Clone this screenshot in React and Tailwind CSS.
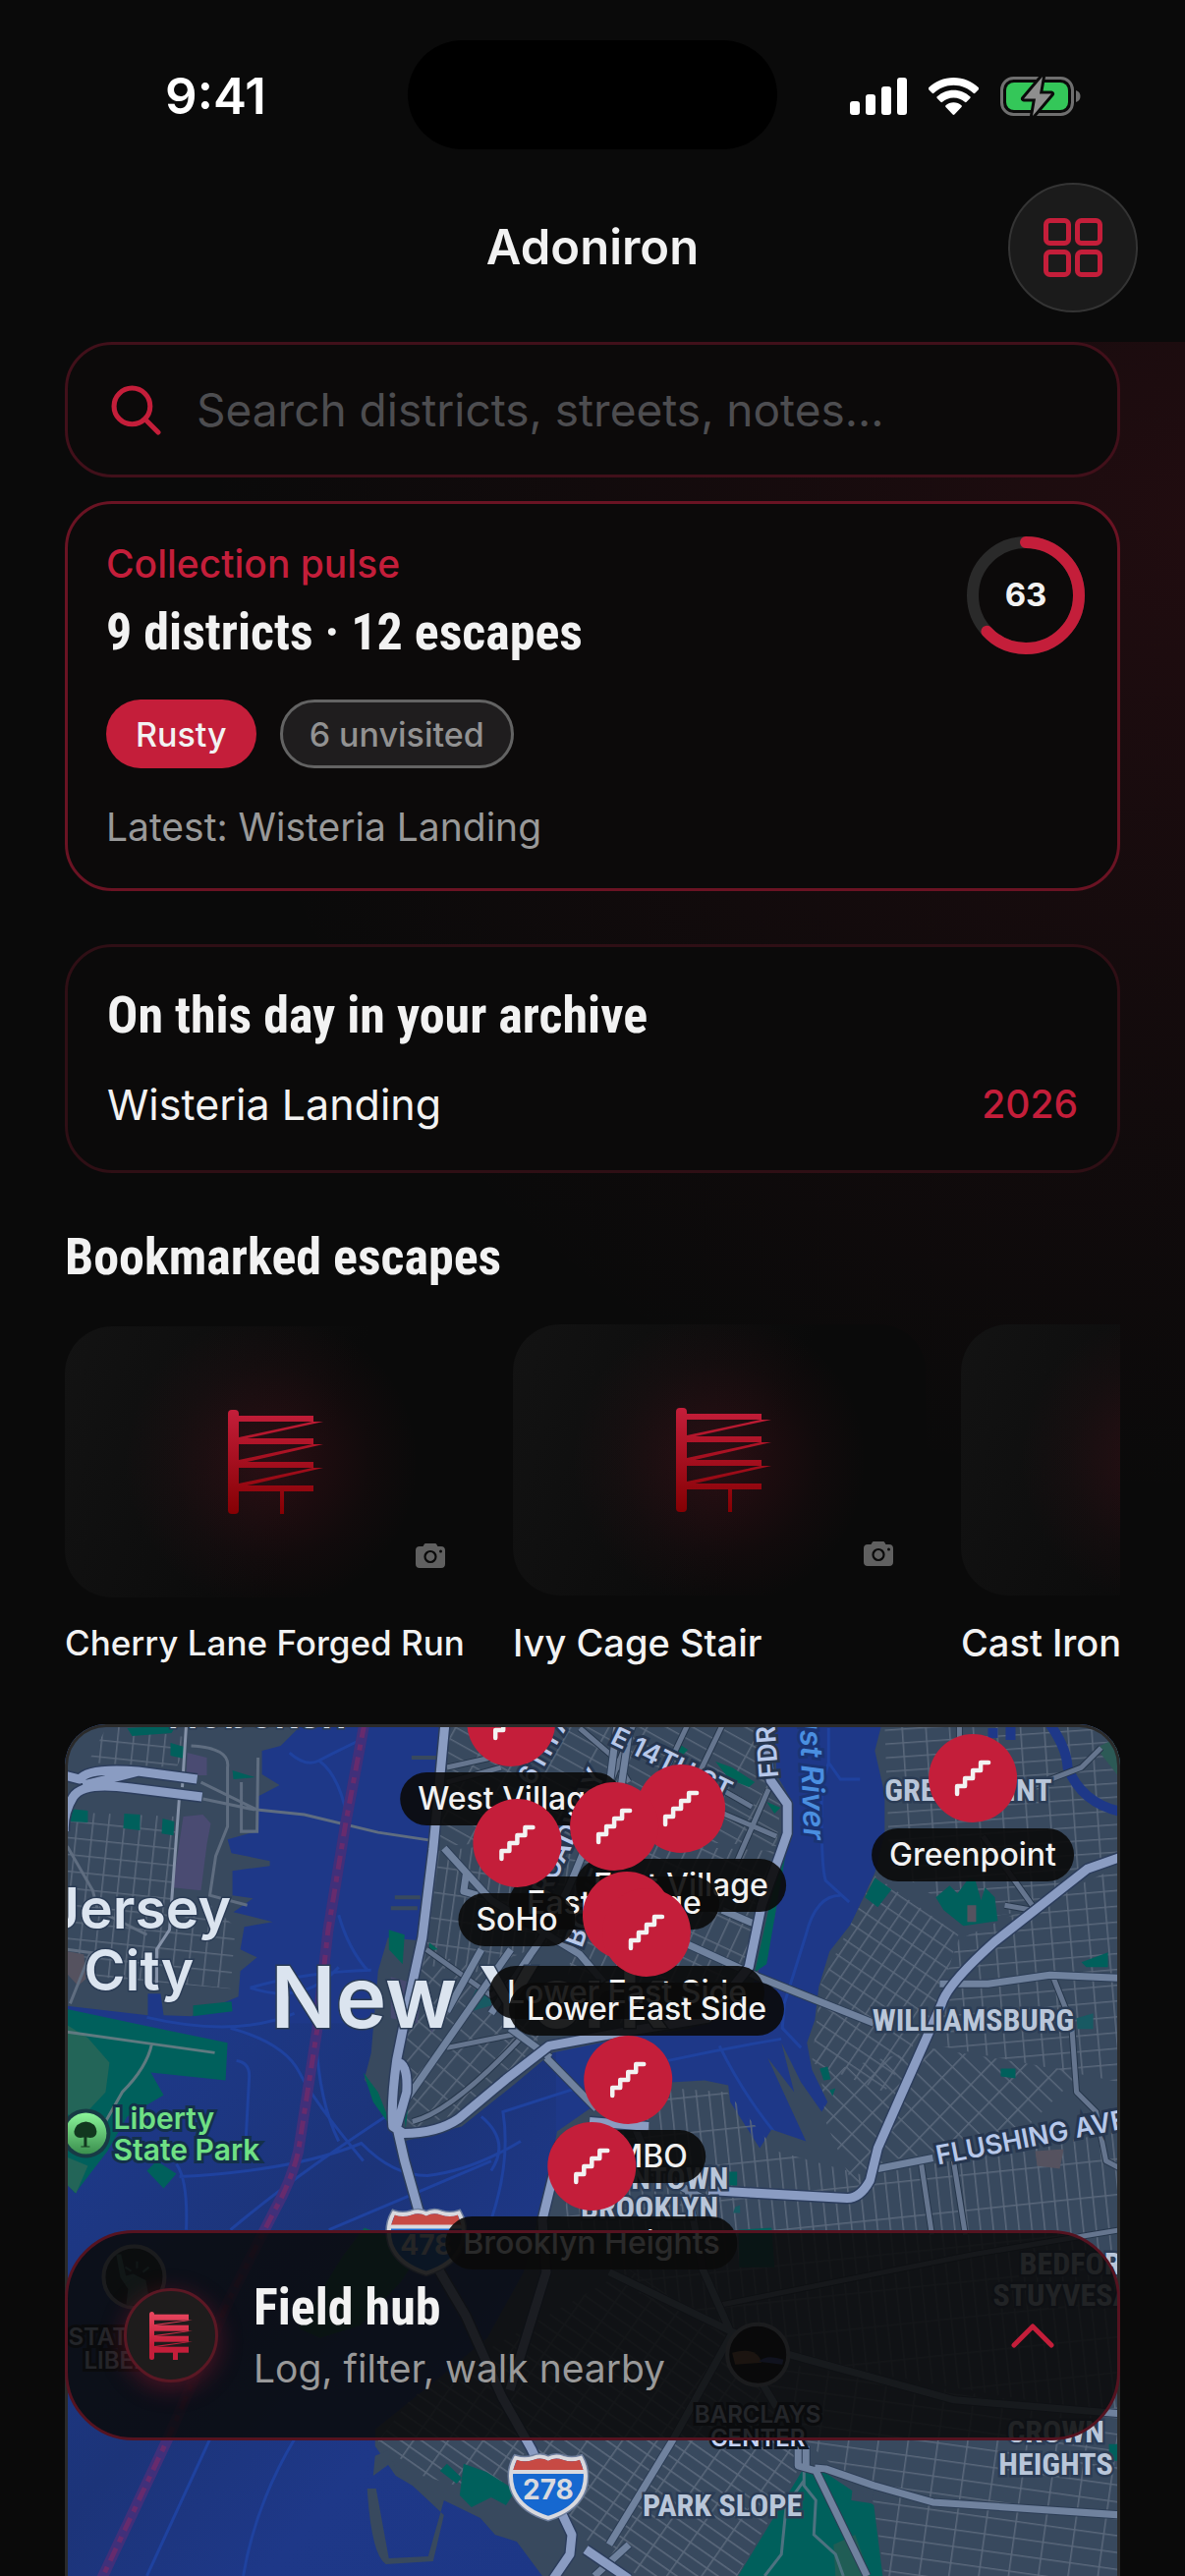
import React from "react";

const DISPLAY =
  "font-['Liberation_Sans_Narrow','Roboto_Condensed',Roboto,sans-serif] font-bold text-[52px] leading-[64px] text-[#f2f2f2]";

function StatusBar() {
  return (
    <div className="grid h-[186px] shrink-0 grid-cols-[1fr_376px_1fr] items-start pt-[41px]">
      <div className="flex h-[114px] items-center justify-center pl-6 text-[51px] font-semibold text-white">9:41</div>
      <div className="h-[111px] rounded-full bg-black" />
      <div className="flex h-[114px] items-center justify-center gap-[22px] pr-8">
        <svg width="58" height="38" viewBox="0 0 58 38" fill="#fff" aria-hidden="true">
          <rect x="0" y="24" width="10" height="14" rx="3" />
          <rect x="16" y="17" width="10" height="21" rx="3" />
          <rect x="32" y="9" width="10" height="29" rx="3" />
          <rect x="48" y="0" width="10" height="38" rx="3" />
        </svg>
        <svg width="51" height="38" viewBox="0 0 51 38" fill="#fff" aria-hidden="true">
          <path d="M25.5 0C35.400 0 44.400 3.900 51 10.300c.5.500.5 1.200 0 1.700l-3.700 3.800c-.5.500-1.200.5-1.700 0C40.300 10.800 33.300 7.800 25.500 7.800S10.700 10.800 5.400 15.800c-.5.500-1.200.5-1.700 0L0 12c-.5-.5-.5-1.200 0-1.700C6.600 3.900 15.600 0 25.500 0z" />
          <path d="M25.500 12.700c6.500 0 12.400 2.500 16.800 6.600.5.500.5 1.200 0 1.700l-3.700 3.800c-.5.500-1.200.5-1.700 0-3-2.700-7-4.300-11.400-4.300s-8.400 1.600-11.400 4.300c-.5.500-1.200.5-1.700 0L8.700 21c-.5-.5-.5-1.200 0-1.700 4.400-4.100 10.300-6.600 16.800-6.600z" />
          <path d="M25.500 25.200c3.100 0 5.900 1.100 8 3 .5.500.5 1.200 0 1.700l-7.100 7.600c-.5.500-1.300.5-1.800 0l-7.100-7.600c-.5-.5-.5-1.200 0-1.700 2.100-1.900 4.900-3 8-3z" />
        </svg>
        <svg width="82" height="42" viewBox="0 0 82 42" aria-hidden="true">
          <rect x="1.500" y="2.500" width="72" height="37" rx="12" fill="none" stroke="#6f6f6f" strokeWidth="3" />
          <rect x="6" y="7" width="63" height="28" rx="8" fill="#34c759" />
          <path d="M77 15c3 1 4.500 3 4.500 6s-1.500 5-4.500 6z" fill="#6f6f6f" />
          <path d="M43 1L24 23.500h12L33 41l19-22.500H40z" fill="#8e8e8e" stroke="#0a0a0a" strokeWidth="6" strokeLinejoin="round" paintOrder="stroke" />
        </svg>
      </div>
    </div>
  );
}

function Header() {
  return (
    <header className="grid h-[162px] shrink-0 grid-cols-[1fr_auto_1fr] items-start px-12">
      <span />
      <h1 className="text-[49px] font-semibold leading-[132px] text-[#f2f2f2]">Adoniron</h1>
      <button
        type="button"
        aria-label="Open grid menu"
        className="flex size-[132px] items-center justify-center justify-self-end rounded-full border-2 border-[#343434] bg-[#1b1b1b]"
      >
        <svg width="60" height="60" viewBox="0 0 60 60" fill="none" stroke="#c41e3a" strokeWidth="5" aria-hidden="true">
          <rect x="2.500" y="2.500" width="23" height="23" rx="4" />
          <rect x="34.500" y="2.500" width="23" height="23" rx="4" />
          <rect x="2.500" y="34.500" width="23" height="23" rx="4" />
          <rect x="34.500" y="34.500" width="23" height="23" rx="4" />
        </svg>
      </button>
    </header>
  );
}

function SearchBar() {
  return (
    <label className="flex h-[138px] shrink-0 items-center gap-9 rounded-[48px] border-[3px] border-[#41101a] bg-[#0c0a0a] px-11">
      <svg width="51" height="51" viewBox="0 0 50 50" fill="none" stroke="#c41e3a" strokeWidth="5" strokeLinecap="round" className="shrink-0" aria-hidden="true">
        <circle cx="21" cy="21" r="18" />
        <path d="M34.500 34.500L47 47" />
      </svg>
      <input
        type="search"
        aria-label="Search"
        placeholder="Search districts, streets, notes…"
        className="w-full min-w-0 bg-transparent text-[46px] text-[#f2f2f2] outline-none placeholder:text-[#4d4d50]"
      />
    </label>
  );
}

function ScoreRing({ value }) {
  const length = 2 * Math.PI * 54;
  return (
    <div className="relative size-[120px]">
      <svg viewBox="0 0 120 120" fill="none" strokeWidth="12" className="size-full -rotate-90" aria-hidden="true">
        <circle cx="60" cy="60" r="54" stroke="#2a2a2a" />
        <circle cx="60" cy="60" r="54" stroke="#c41e3a" strokeLinecap="round" strokeDasharray={`${(length * value) / 100} ${length}`} />
      </svg>
      <span className="absolute inset-0 flex items-center justify-center text-[33px] font-bold text-[#f2f2f2]">{value}</span>
    </div>
  );
}

function PulseCard() {
  return (
    <section className="mt-6 flex shrink-0 items-start justify-between rounded-[48px] border-[3px] border-[#6a1323] bg-[#0c0a0a] py-[33px] pl-[39px] pr-[33px]">
      <div>
        <p className="text-[39px] font-medium leading-[56px] text-[#c41e3a]">Collection pulse</p>
        <h2 className={`mt-[10px] ${DISPLAY}`}>9 districts · 12 escapes</h2>
        <div className="mt-9 flex gap-6">
          <span className="flex h-[70px] items-center rounded-full bg-[#c41e3a] px-[30px] text-[34px] font-medium text-[#f2f2f2]">Rusty</span>
          <span className="flex h-[70px] items-center rounded-full border-[3px] border-[#636363] bg-[#1f1d1e] px-[27px] text-[34px] font-medium text-[#929292]">
            6 unvisited
          </span>
        </div>
        <p className="mt-[30px] text-[39px] leading-[59px] text-[#999]">Latest: Wisteria Landing</p>
      </div>
      <ScoreRing value={63} />
    </section>
  );
}

function ArchiveCard() {
  return (
    <section className="mt-[54px] h-[233px] shrink-0 rounded-[48px] border-[3px] border-[#2f0f15] bg-[#0b0a0a] px-10 pt-[38px]">
      <h2 className={DISPLAY}>On this day in your archive</h2>
      <div className="mt-7 flex items-center justify-between leading-[60px]">
        <span className="text-[43px] text-[#f2f2f2]">Wisteria Landing</span>
        <span className="text-[39px] font-medium text-[#c41e3a]">2026</span>
      </div>
    </section>
  );
}

function FireEscape() {
  return (
    <svg width="105" height="106" viewBox="-8 0 105 106" aria-hidden="true">
      <defs>
        <linearGradient id="escape" x1="0" y1="0" x2="0" y2="106" gradientUnits="userSpaceOnUse">
          <stop stopColor="#c41e3a" />
          <stop offset="1" stopColor="#850003" />
        </linearGradient>
      </defs>
      <g fill="url(#escape)">
        <rect width="11" height="106" rx="4" />
        <rect x="11" y="6" width="76" height="6" />
        <rect x="11" y="29" width="76" height="6" />
        <rect x="11" y="53" width="76" height="6" />
        <rect x="11" y="77" width="76" height="6" />
        <path d="M86 12h11L15 30h-4v-2z" />
        <path d="M86 35h11L15 54h-4v-3z" />
        <path d="M86 59h11L15 78h-4v-3z" />
        <rect x="53" y="83" width="4" height="23" />
      </g>
    </svg>
  );
}

function Camera() {
  return (
    <svg width="30" height="25" viewBox="0 0 30 25" aria-hidden="true">
      <path
        fill="#606060"
        d="M10.500 0h9c1 0 1.600.4 2 1.200L22.500 3H26c2.500 0 4 1.500 4 4v14c0 2.500-1.500 4-4 4H4c-2.500 0-4-1.500-4-4V7c0-2.500 1.500-4 4-4h3.500l1-1.800C8.900.4 9.500 0 10.500 0z"
      />
      <circle cx="15" cy="13.500" r="5.500" fill="none" stroke="#0a0a0a" strokeWidth="2.200" />
      <circle cx="25.500" cy="8" r="1.500" fill="#0a0a0a" />
    </svg>
  );
}

const bookmarks = ["Cherry Lane Forged Run", "Ivy Cage Stair", "Cast Iron Corner"];

function Bookmarks() {
  return (
    <section className="mt-[54px] shrink-0">
      <h2 className={DISPLAY}>Bookmarked escapes</h2>
      <div className="mt-9 flex items-center gap-9 overflow-hidden">
        {bookmarks.map((name, i) => (
          <a key={name} href="#escape" className="block w-[420px] shrink-0">
            <div className="relative flex h-[276px] items-center justify-center rounded-[48px] bg-[radial-gradient(circle_at_center,rgba(196,30,58,0.17),rgba(196,30,58,0.04)_100px,transparent_150px),linear-gradient(110deg,#131313,#0a0a0a_60%)]">
              <FireEscape />
              <span className="absolute bottom-[30px] right-[33px]">
                <Camera />
              </span>
            </div>
            <p
              className={`mt-[22px] whitespace-nowrap font-medium text-[#f2f2f2] ${
                i === 0 ? "text-[35px] leading-[48px]" : "text-[38px] leading-[52px]"
              }`}
            >
              {name}
            </p>
          </a>
        ))}
      </div>
    </section>
  );
}

function Shield({ x, y, children }) {
  return (
    <g transform={`translate(${x} ${y})`}>
      <path d="M-33-28Q-24-25-15-28Q-7-31 0-27Q7-31 15-28Q24-25 33-28Q41-14 36 3Q29 24 0 33Q-29 24-36 3Q-41-14-33-28z" fill="#1668d0" stroke="#6e7f9e" strokeWidth="7" />
      <path d="M-33-28Q-24-25-15-28Q-7-31 0-27Q7-31 15-28Q24-25 33-28Q41-14 36 3Q29 24 0 33Q-29 24-36 3Q-41-14-33-28z" fill="#1668d0" stroke="#d9d9de" strokeWidth="4" />
      <path d="M-32-26Q-24-23-15-26Q-7-29 0-25Q7-29 15-26Q24-23 32-26L36-15H-36z" fill="#c74a44" />
      <path d="M-36-14H36" stroke="#d9d9de" strokeWidth="4" />
      <text y="14" textAnchor="middle" fontSize="28" fontWeight="700" fill="#d9d9de">{children}</text>
    </g>
  );
}

function Grid({ id, w, h, angle }) {
  return (
    <pattern id={id} width={w} height={h} patternUnits="userSpaceOnUse" patternTransform={`rotate(${angle})`}>
      <path d={`M0 0H${w}M0 0V${h}`} stroke="#5a687b" strokeWidth="3" fill="none" />
    </pattern>
  );
}

const highways = [
  "M201 1812L141 1804Q90 1800 82 1812L66 1808M206 1830L134 1821Q85 1814 75 1830T66 1865M85 1818L110 1812 141 1804",
  "M453 1756L447 1820 441 1883 430 1973 417 2033 404 2097Q398 2140 400 2165L411 2172Q445 2172 467 2157L515 2117 559 2083 640 2068 720 2055 762 2003 775 1940 794 1887 801 1867V1837L784 1813 777 1756M402 2100Q416 2098 414 2130L404 2165 412 2200 426 2250 448 2313 474 2357 511 2440 541 2493 563 2540 582 2580 580 2600 563 2625",
  "M1140 1891L1106 1903 1012 1977Q964 2020 958 2040L915 2137 893 2187 885 2220Q875 2238 862 2238L721 2230M563 2215L552 2260 556 2313 519 2433M596 2595L640 2625M600 2160L660 2165",
].join("");

const manhattanAvenues =
  "M452 1882L500 1935 590 1990 620 2025M520 1985L412 2140M490 1985L455 2048M600 1870Q570 1950 540 1990L500 2050M628 1756L620 1820M640 1765L632 1820M519 2065L560 2095M700 1980L770 2012M735 1945L770 1960M475 1905L472 1926 486 1930";
const manhattanStreets =
  "M645 1756L600 1870M735 1757L690 1850M700 1756L660 1840M590 1760L625 1790 640 1815M720 1840L790 1870M730 1820L765 1840M782 1822L750 1895M455 1800L500 1790M455 1815L510 1800M434 1985L500 2032 540 2000M455 2085L530 2070M420 2160Q460 2150 530 2075";
const brooklynAvenues =
  "M1137 2014L1068 2011 1005 2020 956 2020M889 2060L769 2012M556 2095L607 2147M893 2208L949 2197M685 2483L620 2590M685 2483L745 2375M640 2200L720 2240M640 2150L660 2200 700 2230 715 2310 743 2373 790 2450M620 2313L743 2373 803 2397 971 2443 1140 2457M829 2512L840 2513 889 2530 949 2547 1140 2560M812 2490V2510L830 2515 882 2622M820 2490V2510M640 2590L605 2622";
const brooklynStreets =
  "M936 2195L948 2275M970 2200L982 2275M1022 1940L1050 1945M1000 1870L1050 1940M1035 1825L1100 1800 1120 1780M976 1757V1775M1140 2270L990 2295 730 2347M1072 2015L1090 2060 1095 2130 1115 2150 1125 2200 1140 2208";

const boundary = "M371 1756L352 1857 334 1967 323 2067 304 2190Q297 2220 280 2250L234 2340 171 2483 104 2625";

function CityMap() {
  return (
    <svg viewBox="66 1756 1074 866" preserveAspectRatio="xMidYMin slice" className="absolute inset-0 size-full" role="img" aria-label="Map of New York">
      <defs>
        <Grid id="g-nj" w={16} h={17} angle={6} />
        <Grid id="g-mid" w={34} h={13} angle={29} />
        <Grid id="g-soho" w={11} h={26} angle={8} />
        <Grid id="g-fidi" w={17} h={21} angle={40} />
        <Grid id="g-les" w={14} h={27} angle={25} />
        <Grid id="g-green" w={24} h={14} angle={-4} />
        <Grid id="g-wburg" w={14} h={17} angle={34} />
        <Grid id="g-wburg2" w={19} h={16} angle={-5} />
        <Grid id="g-south" w={26} h={15} angle={44} />
        <Grid id="g-bed" w={13} h={36} angle={-6} />
        <Grid id="g-slope" w={29} h={12} angle={35} />
        <Grid id="g-crown" w={30} h={17} angle={8} />
        <linearGradient id="park-pin" x1="0" y1="0" x2="0" y2="1">
          <stop stopColor="#8bf59a" />
          <stop offset="1" stopColor="#3b8f4e" />
        </linearGradient>
        <linearGradient id="water" x1="0" y1="0" x2="1" y2="1">
          <stop stopColor="#1e3a8c" />
          <stop offset="0.450" stopColor="#1c3479" />
          <stop offset="0.700" stopColor="#1e3888" />
          <stop offset="1" stopColor="#1d3786" />
        </linearGradient>
      </defs>

      <rect x="66" y="1756" width="1074" height="866" fill="#1e3888" />
      <rect x="66" y="2060" width="500" height="562" fill="url(#water)" />

      <g fill="none" stroke="#1f429f" strokeWidth="3">
        <path d="M295 1785Q312 1800 325 1793T367 1772M325 1793Q348 1810 355 1860M345 1950Q355 1985 375 2007M255 2024Q310 2008 378 2006M255 2024Q310 2042 345 2003M150 2054Q240 2075 300 2050M235 2065Q290 2080 305 2110T370 2200M322 2075Q325 2140 345 2180M241 2098Q255 2100 254 2115L250 2190M180 2203Q192 2220 190 2270M183 2216Q300 2210 368 2182Q400 2215 435 2215Q480 2210 530 2180M235 2270Q300 2215 400 2150M335 2270L500 2200M500 2260Q520 2200 512 2150L590 2125M214 2483L150 2622M300 2483Q260 2550 248 2622M490 2155Q520 2180 500 2210" />
        <path d="M843 1760V1795L855 1812 875 1812M843 1795L836 1820Q835 1900 840 1915L864 1937M855 1930Q830 1930 820 1970L798 2040 796 2065 815 2085M680 2098Q740 2085 795 2076M732 2083Q760 2140 800 2185" />
      </g>

      {/* New Jersey */}
      <path d="M66 1756H308L286 1778 267 1783 267 1807 285 1818 262 1830V1865L232 1873 236 1887 275 1895V1900L237 1905V1930L258 1933 238 1947 278 1957 249 1962 245 1985 262 1993 245 2007 243 2033 195 2053 167 2052 164 2030H151V2052L66 2042z" fill="#38495e" />
      <path d="M66 1845L180 1850 172 1960 215 1940 240 1962 235 2025 66 2010z" fill="url(#g-nj)" />
      <path d="M110 1757L195 1770 180 1800 90 1795z" fill="url(#g-nj)" />
      <path d="M191 1785L211 1790V1808H190zM187 1850L207 1848 215 1857 211 1878 205 1925 176 1922z" fill="#4a4b72" />
      <path d="M174 1775L188 1779V1791L174 1788zM71 1842L90 1844V1856L72 1855zM127 1847L143 1848V1864L126 1862zM166 1852L178 1855 177 1869 165 1867zM237 1803L260 1810 238 1812zM130 1760L180 1757 175 1765 135 1768z" fill="#00605c" />
      <path d="M69 1987L86 1990 88 2015 80 2022 69 2010z" fill="#55525f" />
      <g fill="none" stroke="#5f6d80" strokeWidth="3">
        <path d="M195 1778Q235 1780 232 1800V1860L220 1890 214 1930 252 1940M205 1815L262 1843 310 1848 385 1866 438 1874M207 1832L260 1843M69 1880L95 1925 100 1945 150 1970M246 1815V1865H262L263 1790M69 1985L120 1992M72 2040L92 1990" />
        <path d="M190 1757L186 1820M183 1830L173 1965 160 1985V2020" stroke="#8592a8" />
      </g>

      {/* Liberty State Park */}
      <path d="M66 2045L150 2063 232 2080 230 2118 154 2110 167 2133 130 2155 110 2190 77 2233 66 2220zM160 2200L180 2213 167 2228 150 2210zM197 2042L236 2038 237 2048 197 2053z" fill="#00605c" />
      <path d="M66 2060L90 2075 112 2100 108 2130 80 2160 66 2150zM66 2195L90 2205 78 2233 66 2222z" fill="#236558" />
      <path d="M69 2069L155 2081 219 2090M155 2081Q150 2105 125 2130L108 2160" fill="none" stroke="#5f7a80" strokeWidth="3" />

      {/* Manhattan */}
      <path d="M455 1756H788L790 1807 807 1837 806 1870 799 1887 788 1953 771 2010 755 2042 700 2066 640 2074 562 2090 520 2125 470 2165 411 2180 400 2170 387 2140 371 2117 378 2090 385 2007 395 1973 428 1976 436 1880z" fill="#38495e" />
      <path d="M419 1788H452V1792H419zM402 1930H428V1934H402zM398 1941H425V1945H398z" fill="#38495e" />
      <path d="M458 1756H780L795 1830 790 1880 600 1870 445 1880z" fill="url(#g-mid)" />
      <path d="M442 1885L600 1870 600 1960 480 2010 430 2000z" fill="url(#g-soho)" />
      <path d="M430 1985L560 2030 545 2085 470 2150 415 2170 410 2080z" fill="url(#g-fidi)" />
      <path d="M600 1875L790 1885 765 2000 640 2060 570 2060z" fill="url(#g-les)" />
      <path d="M396 1965L412 1970 410 2000 396 1985zM437 1978L446 1985 437 1986zM794 1890L799 1890 780 2000 768 2008zM728 1794L745 1800 768 1815 762 1820 742 1812zM780 1835L794 1841 788 1847zM688 1774L700 1782 692 1790zM370 2110L385 2130 400 2168 380 2140zM412 2155L417 2130 413 2168z" fill="#006458" />
      <path d="M475 2045L485 2025 500 2030 500 2042 480 2048z" fill="#185a63" />
      <path d="M398 2013L430 2022 425 2060 398 2055zM433 2050L445 2050 440 2070z" fill="#474a70" />

      {/* Brooklyn and Queens */}
      <path d="M897 1756L890 1783 900 1827V1867L890 1907 878 1933 865 1960 844 1987 833 2023 829 2057 821 2080 826 2107 842 2140 836 2150 815 2120 795 2080 808 2130 781 2095 820 2180 785 2168 773 2187 743 2140 741 2123 717 2118 682 2120 640 2150 600 2147 567 2170 559 2213 548 2257 533 2313 496 2380 448 2420 382 2473V2490L403 2520 420 2530 452 2560 441 2607 393 2610Q378 2600 374 2533H383L396 2604 436 2602 452 2545 489 2563 504 2580 526 2587 552 2622H1140V1756z" fill="#38495e" />
      <path d="M382 2500L400 2492 405 2502 380 2520zM401 2510L418 2495 424 2502 408 2520z" fill="#38495e" />
      <path d="M371 2268L430 2290 408 2323 367 2367 326 2380 304 2370 349 2297z" fill="#0b5a50" />
      <path d="M900 1757L1140 1757V1890L1050 1945 985 1955 905 1900z" fill="url(#g-green)" />
      <path d="M890 1910L975 1970 955 2040 900 2130 826 2100 835 2020z" fill="url(#g-wburg)" />
      <path d="M975 1975L1140 1900V2120L940 2080z" fill="url(#g-wburg2)" />
      <path d="M835 2110L945 2085 1100 2110 1030 2180 900 2200 870 2230 840 2160z" fill="url(#g-south)" />
      <path d="M670 2125L740 2130 790 2190 880 2215 1140 2170V2460L800 2400 640 2330 570 2260 600 2180z" fill="url(#g-bed)" />
      <path d="M420 2440L500 2390 640 2310 745 2380 820 2500 750 2622H650L575 2570 540 2490 500 2540 430 2520 385 2485z" fill="url(#g-slope)" />
      <path d="M825 2490L760 2400 1140 2460V2622H900L888 2545z" fill="url(#g-crown)" />
      <path d="M952 1932L966 1920 974 1928 986 1912 992 1914 998 1935 1002 1922 1012 1932 1015 1956 980 1961 960 1945zM890 1912L907 1924 893 1942 880 1932zM1100 1998L1127 1988 1127 2003 1105 2003zM1018 2106H1033V2116L1018 2114zM834 2106L842 2104 845 2117 838 2118zM844 2128L850 2126 847 2134zM740 2211H750V2225H740zM752 2270L785 2268 788 2308 752 2308zM448 2515L455 2508 470 2522 465 2528zM472 2508L495 2516 525 2535 515 2550 500 2542 480 2552 468 2540zM1128 2488H1140V2505H1128z" fill="#00605c" />
      <path d="M1115 1780L1140 1768V1812z" fill="#2c5a56" />
      <path d="M984 1940H993V1957H984zM1053 2190L1082 2188 1078 2208 1055 2205z" fill="#55525f" />
      <path d="M1095 2055L1112 2050V2066H1096zM748 2247L753 2245 753 2253H746z" fill="#185a63" />
      <path d="M1010 1760L1010 1770M1028 1758V1772M1068 1756Q1085 1780 1086 1800Q1100 1836 1140 1845" fill="none" stroke="#1e3888" strokeWidth="10" />
      <path d="M818 2512L840 2517 889 2550 898 2622H751z" fill="#00605c" />
      <path d="M868 2527L889 2535 886 2548 866 2545z" fill="#38495e" />
      <path d="M848 2590L870 2580 885 2622H850z" fill="#205d55" />
      <path d="M818 2510V2530L830 2545 828 2580 850 2600 858 2622M818 2525L800 2550 795 2600 778 2622" fill="none" stroke="#4d7280" strokeWidth="3" />

      <g fill="none" strokeLinejoin="round">
        <path d={manhattanStreets + brooklynStreets} stroke="#26364a" strokeWidth="7" />
        <path d={manhattanStreets + brooklynStreets} stroke="#65758e" strokeWidth="5" />
        <path d={manhattanAvenues + brooklynAvenues} stroke="#2c3d55" strokeWidth="9" />
        <path d={manhattanAvenues + brooklynAvenues} stroke="#70829e" strokeWidth="7" />
        <path d={highways} stroke="#2c3d5c" strokeWidth="12" />
        <path d={highways} stroke="#8a9cc2" strokeWidth="9" />
        <path d={boundary} stroke="#40307a" strokeWidth="11" />
        <path d={boundary} stroke="#672b6d" strokeWidth="5" strokeDasharray="14 7 6 7" />
      </g>

      <Shield x={434} y={2281}>478</Shield>
      <Shield x={558} y={2530}>278</Shield>

      <circle cx="88" cy="2172" r="25" fill="#173a45" />
      <circle cx="88" cy="2172" r="21" fill="url(#park-pin)" />
      <path d="M86 2185V2176Q76 2178 76 2170 78 2161 88 2160 98 2161 99 2170 99 2178 89 2176V2185H92V2186H83V2185z" fill="#12371f" />
      <circle cx="137" cy="2318" r="31" fill="#13202c" stroke="#8b93a5" strokeWidth="4" />
      <path d="M120 2296L124 2318 132 2330 130 2346 152 2344 148 2322 136 2316 128 2318 123 2296zM134 2312L128 2308M140 2309V2302M146 2313L152 2308" fill="#3f6c6a" stroke="#3f6c6a" strokeWidth="2" />
      <circle cx="771" cy="2397" r="31" fill="#04060b" stroke="#8b93a5" strokeWidth="4" />
      <path d="M745 2395Q770 2388 775 2405L748 2407z" fill="#8a5a35" />
      <path d="M772 2404Q780 2396 797 2402L796 2407z" fill="#3546a0" />

      <g fill="#dbe4ef" stroke="#2b3c55" strokeWidth="3" paintOrder="stroke" fontWeight="600" textAnchor="middle">
        <text x="262" y="1760" fontSize="42">Hoboken</text>
        <text x="142" y="1964" fontSize="57">Jersey</text>
        <text x="142" y="2027" fontSize="57">City</text>
        <text x="276" y="2065" fontSize="87" textAnchor="start">New York</text>
      </g>
      <g fill="#6fe084" stroke="#14304a" strokeWidth="6" paintOrder="stroke" fontWeight="600" fontSize="30">
        <text x="116" y="2168">Liberty</text>
        <text x="116" y="2199">State Park</text>
      </g>
      <g fill="#b9c6d9" stroke="#2b3c55" strokeWidth="5" paintOrder="stroke" fontWeight="700" fontSize="32" textAnchor="middle" fontFamily="'Liberation Sans Narrow', 'Roboto Condensed', Roboto, sans-serif">
        <text x="985" y="1834">GREENPOINT</text>
        <text x="990" y="2068">WILLIAMSBURG</text>
        <text x="661" y="2228">DOWNTOWN</text>
        <text x="661" y="2258">BROOKLYN</text>
        <text x="1037" y="2315" textAnchor="start">BEDFORD-</text>
        <text x="1010" y="2347" textAnchor="start">STUYVESANT</text>
        <text x="1074" y="2486">CROWN</text>
        <text x="1074" y="2519">HEIGHTS</text>
        <text x="735" y="2561">PARK SLOPE</text>
      </g>
      <g fill="#b7c8ea" stroke="#26364f" strokeWidth="6" paintOrder="stroke" fontWeight="600" fontSize="27">
        <text transform="translate(620 1775) rotate(26)">E 14TH ST</text>
        <text transform="translate(792 1810) rotate(-94)">FDR DR</text>
        <text transform="translate(954 2204) rotate(-11)">FLUSHING AVE</text>
        <text transform="translate(542 1820) rotate(-60)">6TH AVE</text>
        <text transform="translate(592 1984) rotate(-70)">BOWERY</text>
        <text transform="translate(558 1932) rotate(-65)">ROADWAY</text>
      </g>
      <g fill="#c6d3f5" stroke="#0e1622" strokeWidth="6" paintOrder="stroke" fontWeight="600" fontSize="24">
        <text x="771" y="2466" textAnchor="middle">BARCLAYS</text>
        <text x="771" y="2490" textAnchor="middle">CENTER</text>
        <text x="70" y="2387">STATUE OF</text>
        <text x="86" y="2411">LIBERTY</text>
      </g>
      <text transform="translate(818 1874) rotate(88)" textAnchor="end" fill="#4a8fe0" stroke="#1a3474" strokeWidth="6" paintOrder="stroke" fontStyle="italic" fontWeight="600" fontSize="31">
        East River
      </text>
    </svg>
  );
}

const pins = [
  { name: "West Village", x: 454, y: -2 },
  { name: "Greenpoint", x: 924, y: 55 },
  { name: "East Village", x: 627, y: 86 },
  { name: "East Village", x: 559, y: 104 },
  { name: "SoHo", x: 460, y: 121 },
  { name: "Lower East Side", x: 572, y: 195 },
  { name: "Lower East Side", x: 592, y: 212 },
  { name: "DUMBO", x: 573, y: 362 },
  { name: "Brooklyn Heights", x: 536, y: 450 },
];

function Pin({ name, x, y }) {
  return (
    <button
      type="button"
      className="absolute flex -translate-x-1/2 flex-col items-center gap-[6px]"
      style={{ left: `${(x / 1074) * 100}%`, top: y - 45 }}
    >
      <span className="flex size-[90px] items-center justify-center rounded-full bg-[#c41e3a]">
        <svg width="38" height="38" viewBox="0 0 38 38" fill="none" stroke="#f2f2f2" strokeWidth="4.500" strokeLinecap="round" strokeLinejoin="round" aria-hidden="true">
          <path d="M3 35v-8h8v-8h8v-8h8V3h8" />
        </svg>
      </span>
      <span className="flex h-[54px] items-center whitespace-nowrap rounded-full bg-[#0a0a0a]/90 px-[18px] text-[32px] font-medium text-[#f2f2f2]">{name}</span>
    </button>
  );
}

function FieldHub() {
  return (
    <button
      type="button"
      className="absolute inset-x-[66px] bottom-[138px] flex h-[214px] items-center rounded-[70px] border-[3px] border-[#551320] bg-[#0a0a0a]/87 pl-[57px] pr-16 text-left"
    >
      <span className="flex size-24 shrink-0 items-center justify-center rounded-full border-[3px] border-[#5a1824] bg-[#1e1c1c] shadow-[0_6px_24px_rgba(196,30,58,0.35)]">
        <svg width="44" height="49" viewBox="0 0 44 49" aria-hidden="true">
          <defs>
            <linearGradient id="hub" x1="0" y1="0" x2="0" y2="49" gradientUnits="userSpaceOnUse">
              <stop stopColor="#e8475f" />
              <stop offset="0.700" stopColor="#c41e3a" />
            </linearGradient>
          </defs>
          <g fill="url(#hub)">
            <rect width="5" height="49" rx="2.500" />
            <rect x="5" y="2.700" width="35" height="6" />
            <rect x="5" y="13.700" width="35" height="6" />
            <rect x="5" y="24.700" width="35" height="6" />
            <rect x="5" y="35.700" width="35" height="6" />
            <path d="M39 8.500h5L7 14H5v-1zM39 19.500h5L7 25H5v-1zM39 30.500h5L7 36H5v-1z" />
            <rect x="24" y="41" width="5" height="8" />
          </g>
        </svg>
      </span>
      <span className="ml-9 flex-1 pt-1">
        <span className={`block ${DISPLAY}`}>Field hub</span>
        <span className="block text-[39px] leading-[60px] text-[#999]">Log, filter, walk nearby</span>
      </span>
      <svg width="44" height="26" viewBox="0 0 44 26" fill="none" stroke="#c41e3a" strokeWidth="5" strokeLinecap="round" strokeLinejoin="round" aria-hidden="true">
        <path d="M3 23L22 4l19 19" />
      </svg>
    </button>
  );
}

export default function App() {
  return (
    <div className="relative flex h-screen flex-col overflow-hidden bg-[#0a0a0a] font-[Inter,sans-serif]">
      <StatusBar />
      <Header />
      <main className="flex min-h-0 flex-1 flex-col bg-[radial-gradient(circle_at_100%_180px,rgba(196,30,58,0.12),rgba(196,30,58,0.06)_450px,transparent_1000px)] px-[66px]">
        <SearchBar />
        <PulseCard />
        <ArchiveCard />
        <Bookmarks />
        <section className="relative mt-[57px] min-h-0 flex-1 overflow-hidden rounded-t-[42px]">
          <CityMap />
          {pins.map((p, i) => (
            <Pin key={i} {...p} />
          ))}
          <div className="pointer-events-none absolute inset-0 rounded-t-[42px] border-[3px] border-b-0 border-[#2a2a2a]" />
        </section>
      </main>
      <FieldHub />
    </div>
  );
}
